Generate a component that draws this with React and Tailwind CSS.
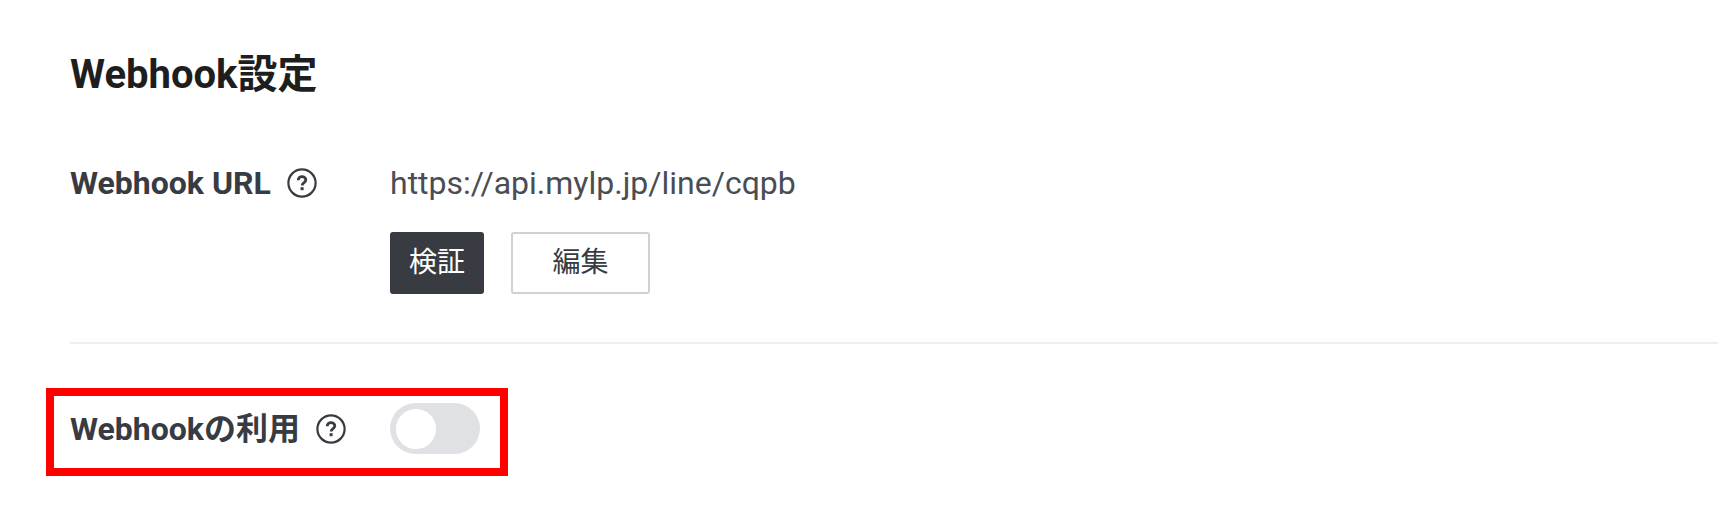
import React from 'react';

function HelpIcon() {
  return (
    <svg width="30" height="30" viewBox="0 0 30 30" fill="none" className="shrink-0">
      <circle cx="15" cy="15" r="13.6" stroke="#383b41" strokeWidth="2.2" />
      <path d="M11.2 12.2c0-2.2 1.7-3.6 3.8-3.6s3.8 1.3 3.8 3.2c0 1.6-1 2.3-2 3-1 .7-1.6 1.3-1.6 2.7" stroke="#383b41" strokeWidth="2.8" />
      <rect x="13.6" y="19.2" width="3" height="3" fill="#383b41" />
    </svg>
  );
}

export default function App() {
  return (
    <div className="w-[1728px] h-[510px] overflow-hidden bg-white pl-[70px] pr-[10px] pt-[45px] font-['Roboto','Noto_Sans_CJK_JP',sans-serif]">
      <h1 className="text-[40px] leading-[60px] font-bold text-[#1e1e1e] mb-[54px]">Webhook設定</h1>

      <div className="flex h-[185px] border-b-2 border-[#eeeeee]">
        <div className="w-[320px] flex items-center gap-[16px] h-[48px]">
          <span className="text-[32px] leading-[48px] font-bold text-[#383b41]">Webhook URL</span>
          <HelpIcon />
        </div>
        <div>
          <div className="text-[32px] leading-[48px] text-[#4a4d54]">https://api.mylp.jp/line/cqpb</div>
          <div className="flex gap-[27px] mt-[25px]">
            <button className="w-[94px] h-[62px] rounded-[3px] bg-[#383b41] text-white text-[28px]">検証</button>
            <button className="w-[139px] h-[62px] rounded-[3px] bg-white border-2 border-[#ced1d5] text-[#383b41] text-[28px]">編集</button>
          </div>
        </div>
      </div>

      <div className="-ml-[24px] mt-[44px] w-[462px] h-[88px] border-8 border-[#ff0000] flex items-center pl-[16px] pb-[7px]">
        <div className="w-[320px] flex items-center gap-[16px]">
          <span className="text-[32px] leading-[48px] font-bold text-[#383b41]">Webhookの利用</span>
          <HelpIcon />
        </div>
        <div className="w-[90px] h-[51px] rounded-full bg-[#dfe1e5] flex items-center pl-[6px]">
          <div className="w-[40px] h-[40px] rounded-full bg-white" />
        </div>
      </div>
    </div>
  );
}
